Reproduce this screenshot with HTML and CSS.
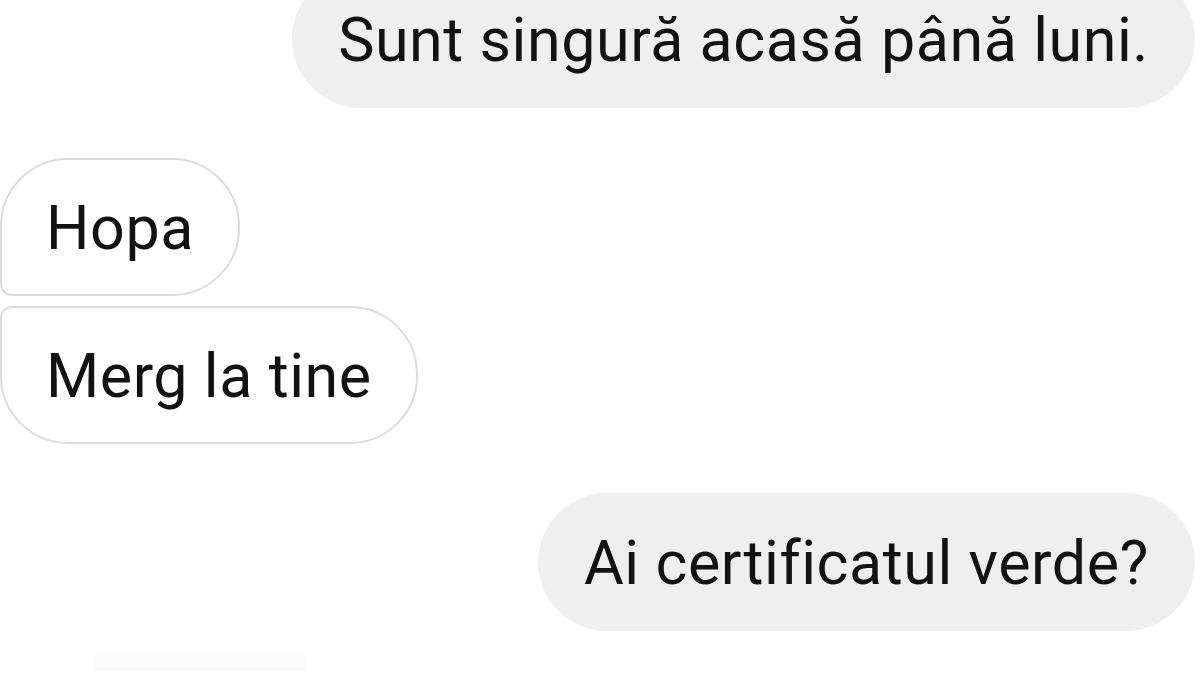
FILE: index.html
```html
<!DOCTYPE html>
<html lang="ro">
<head>
<meta charset="utf-8">
<title>Chat</title>
<link rel="stylesheet" href="styles.css">
</head>
<body>
<main class="chat">
  <div class="msg sent">Sunt singură acasă până luni.</div>
  <div class="group received">
    <div class="msg in first">Hopa</div>
    <div class="msg in last">Merg la tine</div>
  </div>
  <div class="msg sent">Ai certificatul verde?</div>
  <div class="ghost"></div>
</main>
</body>
</html>
```
FILE: styles.css
```css
html, body {
  margin: 0;
  padding: 0;
  background: #ffffff;
  overflow: hidden;
}
body {
  width: 1200px;
  height: 675px;
  font-family: Roboto, "Noto Sans", "Liberation Sans", sans-serif;
  color: #121212;
}
.chat {
  display: flex;
  flex-direction: column;
  margin-top: -30px;
  padding-right: 5px;
}
.msg {
  font-size: 61px;
  line-height: 72px;
  letter-spacing: 0.55px;
  padding: 34px 46px 32px;
  box-sizing: border-box;
  height: 138px;
  white-space: nowrap;
}
.sent {
  align-self: flex-end;
  background: #efefef;
  border-radius: 69px;
}
.sent + .group {
  margin-top: 50px;
}
.group {
  display: flex;
  flex-direction: column;
  align-items: flex-start;
  gap: 10px;
}
.group + .sent {
  margin-top: 49px;
}
.in {
  background: #ffffff;
  border: 2px solid #dcdcdc;
  padding: 32px 44px 30px;
}
.in.first {
  border-radius: 68px 68px 68px 12px;
}
.in.last {
  border-radius: 12px 68px 68px 68px;
}
.ghost {
  margin-top: 24px;
  margin-left: 93px;
  width: 214px;
  height: 16px;
  background: #fcfcfc;
}
```
